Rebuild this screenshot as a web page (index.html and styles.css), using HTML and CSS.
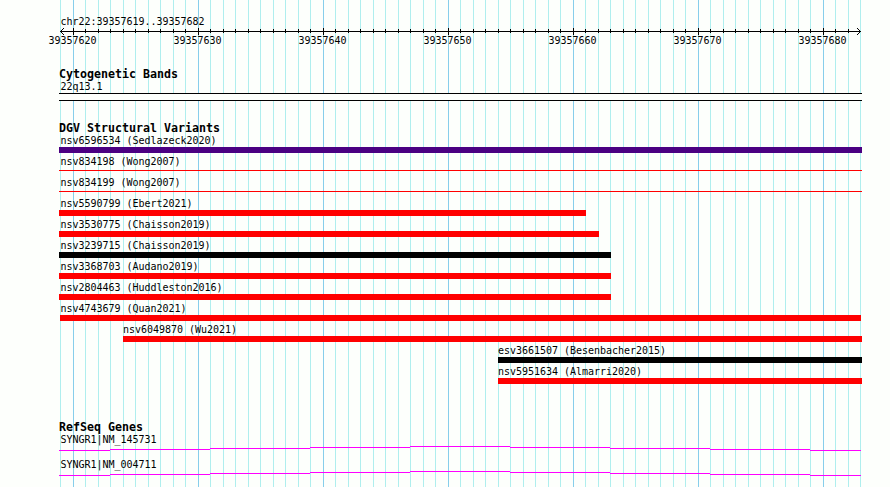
FILE: index.html
```
<!DOCTYPE html>
<html>
<head>
    <meta charset="utf-8">
    <title>chr22:39357619..39357682</title>
    <link rel="stylesheet" href="styles.css">
</head>
<body>
    <div class="browser">
        <!-- Ruler -->
        <div class="ruler">
            <div class="label">chr22:39357619..39357682</div>
            <svg class="axis" width="803" height="7" shape-rendering="crispEdges">
                <defs>
                    <pattern id="minor" x="1" width="25" height="7" patternUnits="userSpaceOnUse">
                        <rect x="0" y="1" width="1" height="4"/>
                        <rect x="13" y="1" width="1" height="4"/>
                    </pattern>
                    <pattern id="major" x="14" width="125" height="7" patternUnits="userSpaceOnUse">
                        <rect width="1" height="7"/>
                    </pattern>
                </defs>
                <rect x="1" y="3" width="801" height="1"/>
                <rect x="5" width="793" height="7" fill="url(#minor)"/>
                <rect x="5" width="793" height="7" fill="url(#major)"/>
                <path d="M4 0h1v1h-1zM3 1h1v1h-1zM2 2h1v1h-1zM2 4h1v1h-1zM3 5h1v1h-1zM4 6h1v1h-1z"/>
                <path d="M798 0h1v1h-1zM799 1h1v1h-1zM800 2h1v1h-1zM800 4h1v1h-1zM799 5h1v1h-1zM798 6h1v1h-1z"/>
            </svg>
            <div class="numbers">
                <span>39357620</span>
                <span>39357630</span>
                <span>39357640</span>
                <span>39357650</span>
                <span>39357660</span>
                <span>39357670</span>
                <span>39357680</span>
            </div>
        </div>

        <!-- Cytogenetic bands -->
        <div class="track cyto">
            <h2>Cytogenetic Bands</h2>
            <div class="label">22q13.1</div>
            <div class="band"></div>
        </div>

        <!-- Structural variants -->
        <div class="track variants">
            <h2>DGV Structural Variants</h2>
            <div class="row">
                <div class="label">nsv6596534 (Sedlazeck2020)</div>
                <div class="bar complex"></div>
            </div>
            <div class="row">
                <div class="label">nsv834198 (Wong2007)</div>
                <div class="bar thin"></div>
            </div>
            <div class="row">
                <div class="label">nsv834199 (Wong2007)</div>
                <div class="bar thin"></div>
            </div>
            <div class="row" style="width: 527px">
                <div class="label">nsv5590799 (Ebert2021)</div>
                <div class="bar"></div>
            </div>
            <div class="row" style="width: 540px">
                <div class="label">nsv3530775 (Chaisson2019)</div>
                <div class="bar"></div>
            </div>
            <div class="row" style="width: 552px">
                <div class="label">nsv3239715 (Chaisson2019)</div>
                <div class="bar other"></div>
            </div>
            <div class="row" style="width: 552px">
                <div class="label">nsv3368703 (Audano2019)</div>
                <div class="bar"></div>
            </div>
            <div class="row" style="width: 552px">
                <div class="label">nsv2804463 (Huddleston2016)</div>
                <div class="bar"></div>
            </div>
            <div class="row">
                <div class="label">nsv4743679 (Quan2021)</div>
                <div class="bar inset"></div>
            </div>
            <div class="row partial" style="width: 739px">
                <div class="label">nsv6049870 (Wu2021)</div>
                <div class="bar"></div>
            </div>
            <div class="row partial" style="width: 364px">
                <div class="label">esv3661507 (Besenbacher2015)</div>
                <div class="bar other"></div>
            </div>
            <div class="row partial" style="width: 364px">
                <div class="label">nsv5951634 (Almarri2020)</div>
                <div class="bar"></div>
            </div>
        </div>

        <!-- Genes -->
        <div class="track genes">
            <h2>RefSeq Genes</h2>
            <div class="gene">
                <div class="label">SYNGR1|NM_145731</div>
                <svg width="803" height="5" shape-rendering="crispEdges">
                    <path id="intron" fill="#f0f" d="M0 4h51v1h-51zM51 3h100v1h-100zM151 2h100v1h-100zM251 1h100v1h-100zM351 0h100v1h-100zM451 1h100v1h-100zM551 2h100v1h-100zM651 3h100v1h-100zM751 4h51v1h-51z"/>
                </svg>
            </div>
            <div class="gene">
                <div class="label">SYNGR1|NM_004711</div>
                <svg width="803" height="5" shape-rendering="crispEdges">
                    <use href="#intron"/>
                </svg>
            </div>
        </div>
    </div>
</body>
</html>
```

FILE: styles.css
```
body {
    margin: 0;
    background-color: #fdfffc;
    color: #000;
    font-family: "DejaVu Sans Mono", "Liberation Mono", monospace;
    font-size: 10px;
    overflow: hidden;
}
.browser {
    box-sizing: border-box;
    width: 803px;
    height: 487px;
    margin-left: 59px;
    padding-top: 15px;
    /* major lines every 10 bases, minor lines every base */
    background-image:
        repeating-linear-gradient(to right, #87ceeb 0 1px, transparent 1px 125px),
        repeating-linear-gradient(to right, #afeeee 0 1px, transparent 1px 13px, #afeeee 13px 14px, transparent 14px 25px);
    background-position: 14px 0, 1px 0;
    background-size: 788px 100%, 801px 100%;
    background-repeat: no-repeat;
}
svg {
    display: block;
}
.label {
    height: 12px;
    line-height: 14px;
    padding-left: 1.5px;
    letter-spacing: -0.02px;
    white-space: nowrap;
}
h2 {
    height: 13px;
    line-height: 15px;
    margin: 0;
    font-size: 11.63px;
    font-weight: bold;
    white-space: nowrap;
}
.ruler {
    height: 52px;
}
.axis {
    margin-top: 1px;
}
.numbers {
    display: flex;
    margin-left: -49px;
    line-height: 12px;
    letter-spacing: -0.02px;
}
.numbers span {
    flex: none;
    width: 125px;
    text-align: center;
}
.cyto {
    height: 54px;
}
.band {
    height: 6px;
    margin-top: 1px;
    border-top: 1px solid #000;
    border-bottom: 1px solid #000;
    background-color: #fdfffc;
}
.variants {
    height: 299px;
}
.row {
    height: 21px;
}
.partial {
    margin-left: auto;
}
.partial .label {
    padding-left: 0;
}
.bar {
    height: 6px;
    margin-top: 1px;
    background-color: #f00;
}
.complex {
    background-color: #4b0082;
}
.other {
    background-color: #000;
}
.thin {
    height: 1px;
    margin-top: 3px;
}
.inset {
    margin: 1px 1px 0;
}
.gene {
    height: 25px;
}
.gene svg {
    margin-top: 1px;
}
```
